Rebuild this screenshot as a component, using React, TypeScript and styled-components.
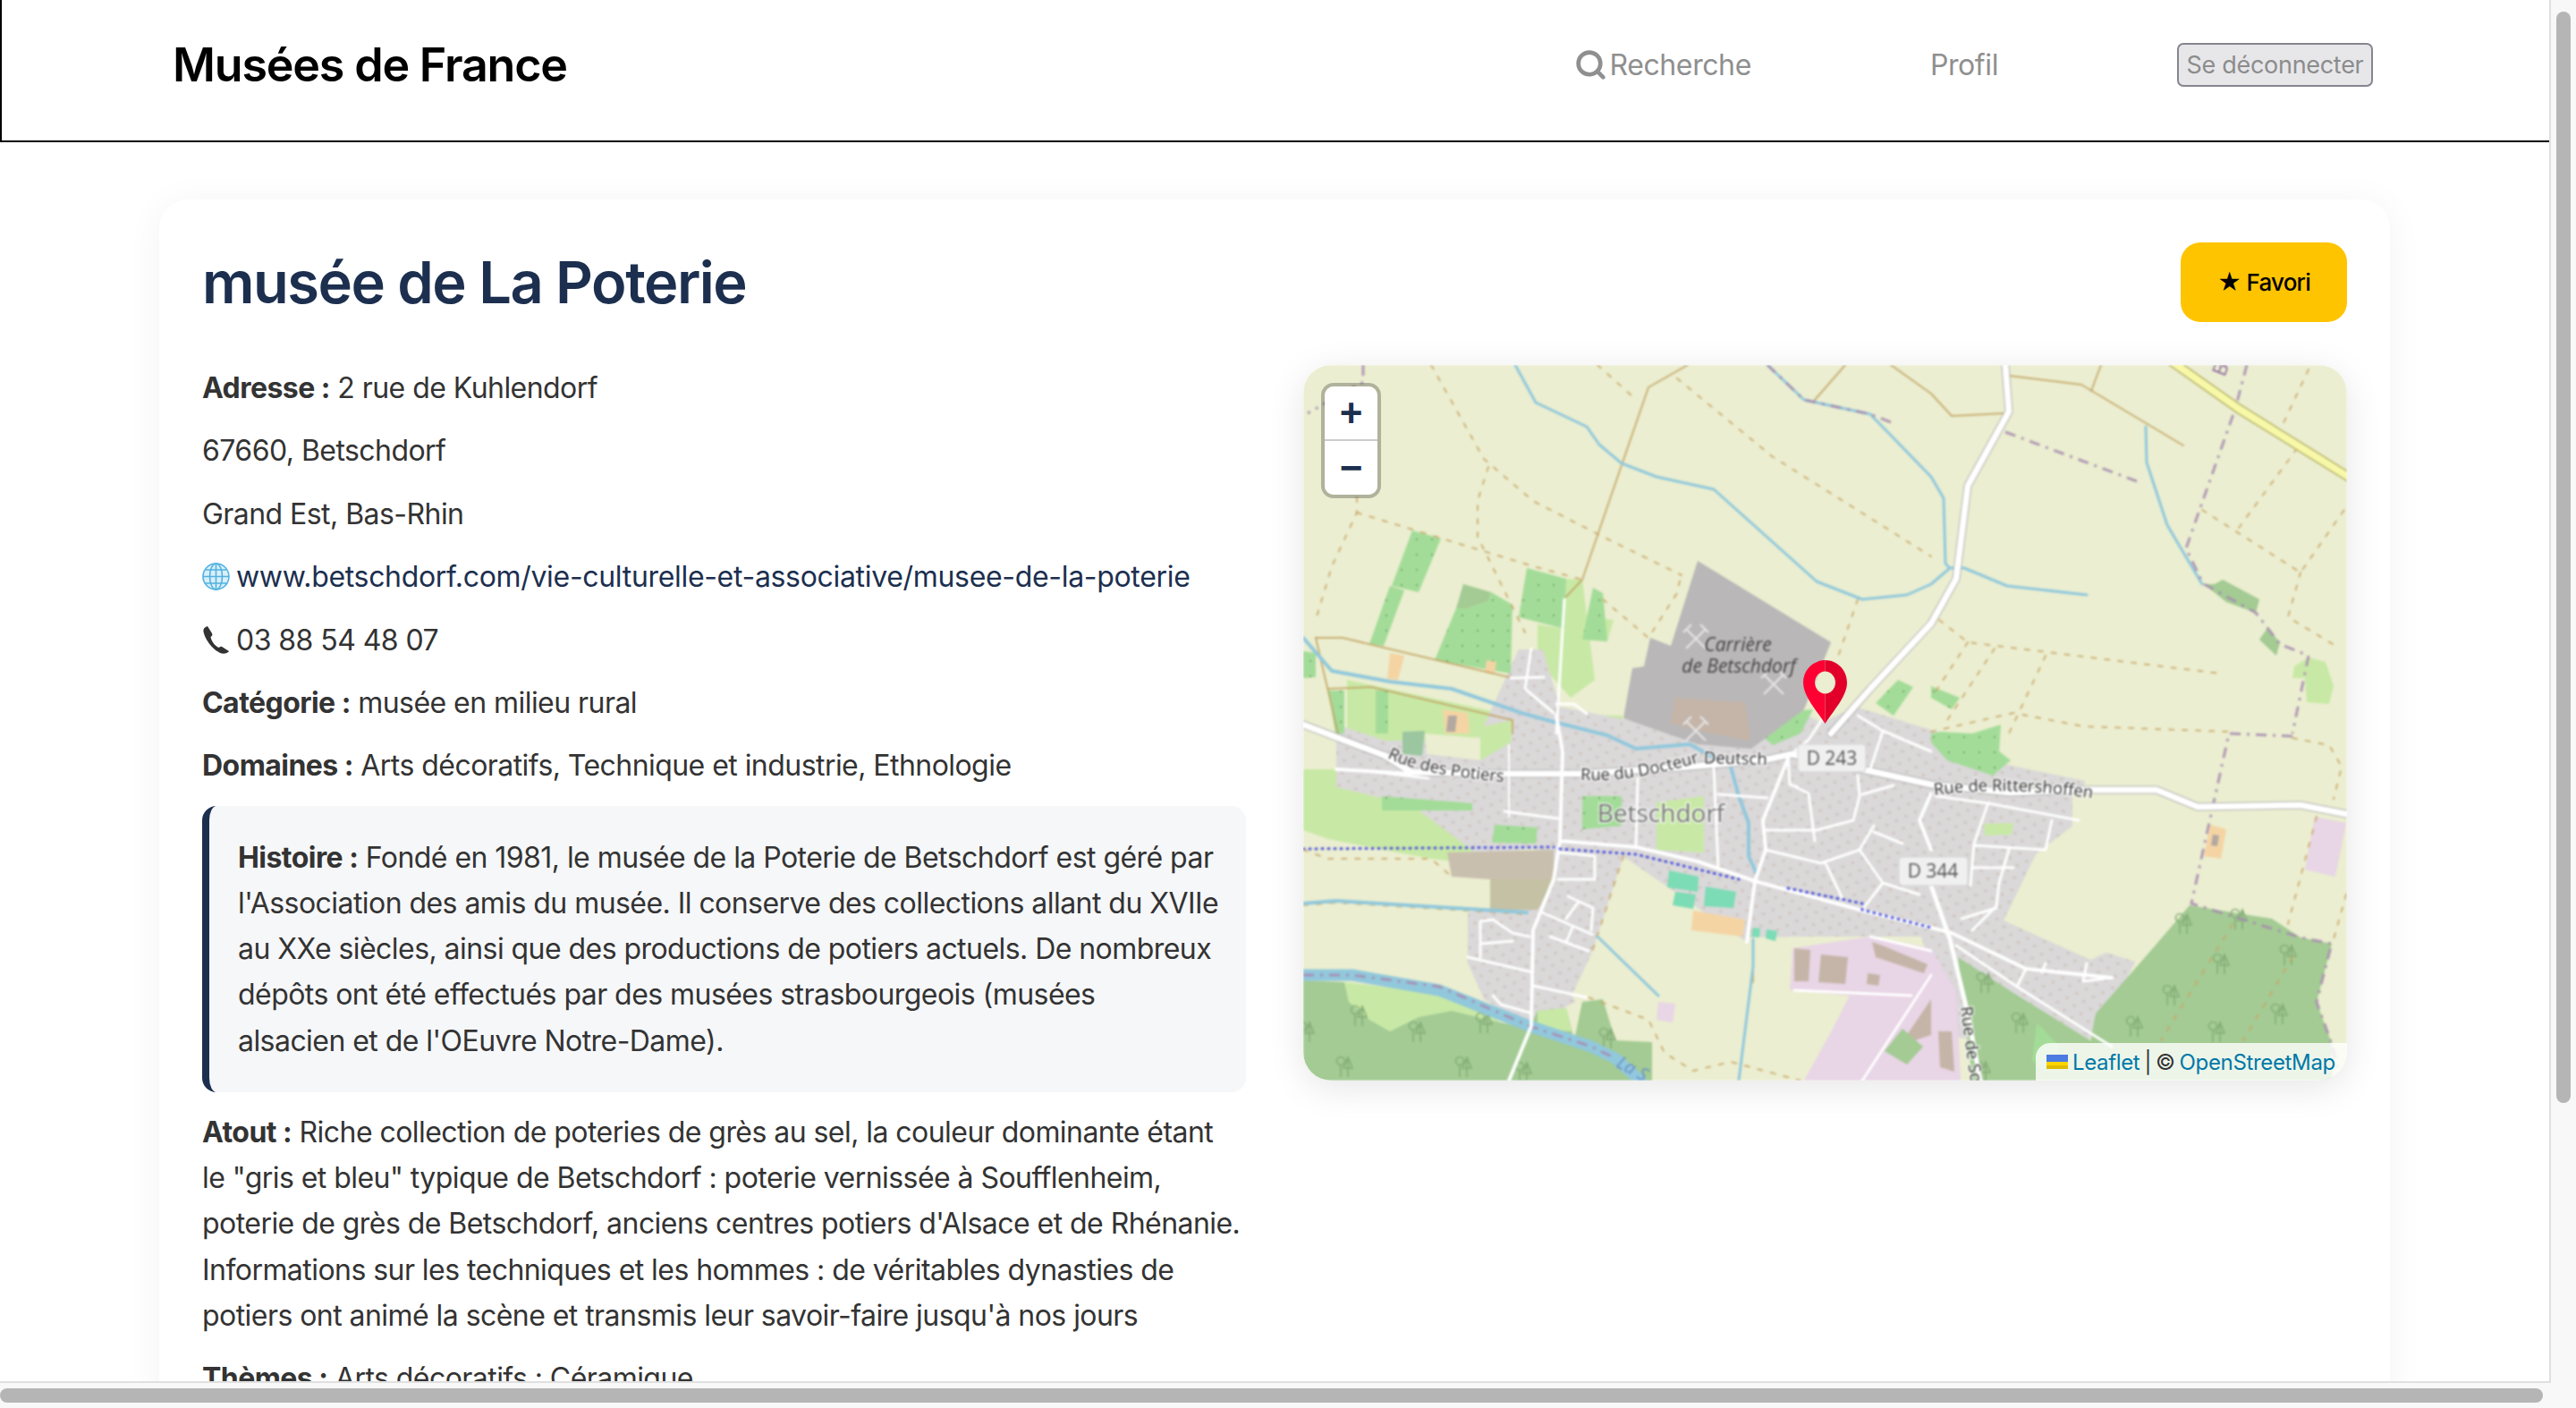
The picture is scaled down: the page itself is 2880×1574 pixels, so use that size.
import React from 'react'
import styled, { createGlobalStyle } from 'styled-components'
import { Search } from 'lucide-react'

const NAVY = '#1c2f4f'
const TEXT_FONT = '"Inter", "Noto Sans", "Liberation Sans", sans-serif'

const GlobalStyle = createGlobalStyle`
  html, body {
    margin: 0;
    height: 100%;
    overflow: hidden;
    background: #fff;
    font-family: ${TEXT_FONT};
  }
`

const Frame = styled.div`
  display: grid;
  grid-template-columns: 2850px 30px;
  grid-template-rows: 1544px 30px;
  width: 2880px;
  height: 1574px;
`
const Viewport = styled.div`
  overflow: hidden;
  min-width: 0;
`
const VerticalRail = styled.div`
  box-sizing: border-box;
  padding: 13px 6px 0;
  background: #f8f8f8;
  border-left: 2px solid #e0e0e0;
`
const HorizontalRail = styled.div`
  box-sizing: border-box;
  padding-top: 6px;
  background: #f8f8f8;
  border-top: 2px solid #e0e0e0;
`
const RailCorner = styled.div`
  background: linear-gradient(#e0e0e0, #e0e0e0) 0 0 / 2px 2px no-repeat #f8f8f8;
`
const Thumb = styled.div<{ $w: string; $h: string }>`
  width: ${(p) => p.$w};
  height: ${(p) => p.$h};
  background: #b5b5b5;
  border-radius: 8px;
`
const Header = styled.header`
  box-sizing: border-box;
  height: 159px;
  padding: 0 197px 12px 191px;
  display: flex;
  align-items: center;
  justify-content: space-between;
  border-left: 2px solid #000;
  border-bottom: 2px solid #000;
`
const Brand = styled.div`
  font-size: 52px;
  font-weight: 600;
  color: #000;
  letter-spacing: -1.2px;
`
const Nav = styled.nav`
  display: flex;
  align-items: center;
  gap: 200px;
`
const NavItem = styled.a`
  display: flex;
  align-items: center;
  gap: 2px;
  font-size: 32px;
  color: #8f8f8f;
  letter-spacing: -0.4px;
`
const LogoutButton = styled.button`
  box-sizing: border-box;
  height: 49px;
  width: 219px;
  padding: 0;
  background: #e7e7ea;
  border: 2px solid #85858f;
  border-radius: 7px;
  font-family: ${TEXT_FONT};
  font-size: 27px;
  color: #8c8c8c;
  letter-spacing: -0.3px;
`
const Main = styled.main`
  padding: 64px 178px;
`
const Card = styled.section`
  box-sizing: border-box;
  width: 2494px;
  min-height: 1640px;
  padding: 48px;
  background: #fff;
  border-radius: 32px;
  box-shadow: 0 4px 40px rgba(0, 0, 0, 0.05);
`
const CardHead = styled.div`
  display: flex;
  justify-content: space-between;
  align-items: center;
  margin-bottom: 48px;
`
const Title = styled.h1`
  margin: 0;
  font-size: 65px;
  font-weight: 600;
  color: ${NAVY};
  letter-spacing: -1.5px;
`
const FavoriteButton = styled.button`
  width: 186px;
  height: 89px;
  padding: 0;
  border: none;
  border-radius: 22px;
  background: #ffc400;
  font-family: ${TEXT_FONT};
  font-size: 26px;
  font-weight: 500;
  color: #000;
  letter-spacing: -0.8px;
`
const Columns = styled.div`
  display: grid;
  grid-template-columns: 1167px 1167px;
  gap: 64px;
  align-items: start;
`
const Line = styled.p`
  margin: 0 0 19.2px;
  font-size: 32px;
  line-height: 51.2px;
  color: #333;
  letter-spacing: -0.55px;
  white-space: nowrap;
  strong { font-weight: 700; }
`
const IconLine = styled(Line)`
  display: flex;
  align-items: center;
  gap: 7px;
`
const SiteLink = styled.a`
  color: ${NAVY};
  letter-spacing: -0.32px;
`
const History = styled.blockquote`
  box-sizing: border-box;
  margin: 0 0 19.2px;
  padding: 32px;
  height: 320px;
  background: #f6f7f9;
  border-left: 8px solid ${NAVY};
  border-radius: 16px;
`
const HistoryText = styled(Line)`
  margin: 0;
`
const MapFrame = styled.div`
  position: relative;
  height: 800px;
  border-radius: 32px;
  overflow: hidden;
  box-shadow: 0 8px 40px rgba(0, 0, 0, 0.1);
`
const MapArt = styled.svg`
  display: block;
  width: 1167px;
  height: 800px;
  filter: blur(0.8px);
`
const ZoomBox = styled.div`
  position: absolute;
  top: 20px;
  left: 20px;
  width: 67px;
  box-sizing: border-box;
  border: 4px solid rgba(0, 0, 0, 0.25);
  border-radius: 14px;
  background-clip: padding-box;
  overflow: hidden;
`
const ZoomButton = styled.div<{ $last?: boolean }>`
  height: ${(p) => (p.$last ? '60px' : '61px')};
  background: #fff;
  display: flex;
  align-items: center;
  justify-content: center;
  box-sizing: border-box;
  border-bottom: ${(p) => (p.$last ? 'none' : '2px solid #ccc')};
  font-family: "Liberation Sans", sans-serif;
  font-size: 44px;
  font-weight: 700;
  color: ${NAVY};
`
const Pin = styled.svg`
  position: absolute;
  left: 559px;
  top: 330px;
  width: 49px;
  height: 71px;
`
const Attribution = styled.div`
  position: absolute;
  right: 0;
  bottom: 0;
  height: 42px;
  width: 348px;
  box-sizing: border-box;
  padding-left: 12px;
  display: flex;
  align-items: center;
  gap: 5px;
  background: rgba(255, 255, 255, 0.8);
  border-top-left-radius: 16px;
  font-size: 24px;
  letter-spacing: -0.35px;
  color: #333;
  white-space: nowrap;
`
const AttributionLink = styled.a`
  color: #0078a8;
`

type Shape = [string, string]

const AREAS: Shape[] = [
  // light meadows and fields
  ['#c8e9a5', '0,452 37,452 88,478 195,492 214,514 214,560 143,552 28,530 0,520'],
  ['#c8e9a5', '49,352 221,389 234,412 240,440 120,430 49,412'],
  ['#c8e9a5', '294,239 312,240 326,352 299,372 262,330 262,290 292,295'],
  ['#c8e9a5', '326,282 347,285 340,309 322,305'],
  ['#c8e9a5', '230,389 356,392 372,430 300,440 240,420'],
  ['#c8e9a5', '1124,327 1143,332 1152,359 1147,379 1122,377 1120,350 1106,350 1108,337'],
  ['#c8e9a5', '867,478 880,478 876,509 858,509'],
  // residential village
  ['url(#houses)', '37,402 92,420 195,419 241,318 268,318 287,382 378,400 489,391 544,382 580,400 617,382 709,410 783,446 874,465 867,510 819,547 783,621 930,667 904,720 874,760 801,768 727,750 691,639 562,639 496,640 500,660 430,650 358,549 322,659 317,705 253,739 202,709 184,669 184,612 225,590 262,540 195,547 121,492 37,472'],
  ['#ebeed0', '136,412 198,417 198,442 138,435'],
  ['#ebeed0', '322,659 362,552 500,648 496,800 370,800 300,705'],
  ['#ebeed0', '0,555 161,555 250,600 184,612 184,669 202,709 152,695 0,680'],
  ['#ebeed0', '791,470 860,478 860,515 830,560 783,621 880,665 1000,610 1040,520 1000,480'],
  ['#c8e9a5', '198,405 234,397 232,422 198,442'],
  ['#9bc6a0', '111,410 136,409 133,437 111,435'],
  ['#c8e9a5', '395,489 448,482 448,545 395,542'],
  ['#c8e9a5', '761,513 794,512 792,525 762,526'],
  // forests
  ['#c8e9a5', '46,690 152,702 189,712 221,735 166,722 129,729 97,745 74,732 51,712'],
  ['#a3cb93', '0,688 46,690 51,712 74,732 97,745 129,729 166,722 221,735 253,742 262,722 294,719 303,755 312,712 335,709 349,755 390,757 390,800 0,800'],
  ['#c8e9a5', '262,722 294,719 300,745 262,742'],
  ['#a3cb93', '991,604 1051,614 1083,619 1115,640 1150,647 1133,712 1150,759 1150,800 872,800 886,725 950,652'],
  ['#a3cb93', '732,662 794,702 886,759 872,800 748,800'],
  ['#a3dc98', '820,735 846,762 830,790 815,778'],
  ['#a3cb93', '1028,240 1069,262 1065,277 1032,265 1007,245 1019,245'],
  ['#a3cb93', '1078,294 1092,310 1088,325 1069,307'],
  ['#a3cb93', '179,245 210,254 207,264 184,272 171,272'],
  // orchards
  ['url(#orchard)', '122,185 154,194 129,254 99,247'],
  ['url(#orchard)', '97,247 113,252 90,314 74,312'],
  ['url(#orchard)', '210,254 234,268 232,345 147,330 171,272 184,272 207,264'],
  ['url(#orchard)', '250,227 294,239 292,295 253,285 241,282'],
  ['url(#orchard)', '324,249 335,255 340,309 312,307'],
  ['url(#orchard)', '0,320 14,322 14,349 0,350'],
  ['url(#orchard)', '28,364 46,364 46,412 36,412'],
  ['url(#orchard)', '81,364 95,364 95,412 81,412'],
  ['url(#orchard)', '312,482 356,482 356,515 312,519'],
  ['url(#orchard)', '214,514 262,517 260,535 211,534'],
  ['url(#orchard)', '88,482 189,490 189,498 88,498'],
  ['url(#orchard)', '510,412 528,389 570,385 556,412 525,425'],
  ['url(#orchard)', '702,412 713,410 748,412 780,402 778,432 791,442 771,459 720,442 702,422'],
  ['url(#orchard)', '702,359 734,372 725,385 702,372'],
  ['url(#orchard)', '640,378 665,352 682,360 660,392'],
  // quarry
  ['#b9b7b8', '441,219 590,310 560,385 501,429 441,424 358,395 368,339 381,337 388,305 411,314'],
  ['#c5b5a8', '416,372 494,377 500,420 445,410 410,400'],
  // farms, pitches, schools
  ['#f5d4a4', '97,322 113,325 106,352 94,351'],
  ['#f5d4a4', '156,385 184,389 186,412 159,412'],
  ['#f5d4a4', '205,330 216,332 214,345 203,344'],
  ['#f5d4a4', '436,610 494,620 491,639 434,632'],
  ['#f5d4a4', '1014,514 1032,519 1026,552 1007,549'],
  ['#b3a9a0', '1017,525 1024,526 1022,538 1015,537'],
  ['#b3a9a0', '162,392 172,392 170,410 160,410'],
  ['#c9bfae', '161,545 280,542 280,575 209,575 166,572'],
  ['#c4c1a4', '209,575 280,575 262,609 209,609'],
  ['#7bdcb5', '409,565 442,572 441,589 407,584'],
  ['#7bdcb5', '416,589 439,592 436,608 413,604'],
  ['#7bdcb5', '450,583 484,589 481,607 448,605'],
  ['#7bdcb5', '503,629 511,630 510,640 501,639'],
  ['#7bdcb5', '518,631 530,633 528,644 517,641'],
  // industrial
  ['#e8d5e6', '547,652 634,639 702,652 730,700 735,800 560,800 592,742 611,705 544,699'],
  ['#e8d5e6', '397,712 416,714 413,735 395,732'],
  ['#e8d5e6', '1131,505 1166,512 1154,572 1120,564'],
  ['#c5b5a8', '549,652 567,654 565,689 549,689'],
  ['#c5b5a8', '579,659 609,662 606,692 576,690'],
  ['#c5b5a8', '631,680 645,682 643,694 630,692'],
  ['#c5b5a8', '636,645 650,650 698,670 694,680 640,662'],
  ['#c5b5a8', '675,749 702,709 702,749 684,755'],
  ['#c5b5a8', '710,745 725,745 728,790 712,785'],
  ['#a3cb93', '670,742 693,762 675,782 650,767'],
]

const WATER: [number, string][] = [
  [3, '237,0 260,42 317,69 331,89 356,110 395,125 459,139 574,242 625,262 675,257 702,245 723,227 739,227 787,247 876,257'],
  [3, '519,0 560,39 634,55 702,125 716,149 718,222 723,227'],
  [3, '942,69 943,109 966,179 1005,245'],
  [4, '0,305 32,342 97,354 166,362 244,389 280,399 340,414 372,429 432,424 478,449 487,482 498,512 498,549 507,569'],
  [3, '503,642 503,672 487,800'],
  [4, '0,602 37,599 250,612'],
  [3, '329,639 397,705'],
  [13, '0,682 55,682 152,699 253,739 322,762 349,775 377,800'],
]

const TRACKS = [
  '430,0 386,25 356,112 312,240 294,259',
  '606,0 572,39',
  '657,0 702,32 725,57 785,54',
  '789,12 870,22 984,90',
  '892,0 881,29',
  '14,305 44,305 230,349',
  '14,305 39,412',
  '28,362 76,360 234,397 234,412',
  '503,660 503,690',
]

const DASHES = [
  '143,0 202,105 257,152 335,192 423,235',
  '60,165 257,225 312,240',
  '60,148 60,165 32,225 14,285',
  '207,114 195,152 195,192 248,299',
  '335,262 386,305 418,255 423,232',
  '418,15 524,102 702,214',
  '329,0 368,35',
  '620,262 597,329',
  '1005,162 1115,232 1166,159',
  '1046,182 1110,95',
  '1115,232 1101,282 1156,315',
  '711,285 743,310 1026,345',
  '743,310 707,365',
  '773,317 720,397',
  '830,325 789,412',
  '702,410 794,389 872,404 1037,410',
  '1124,5 1094,69',
  '1106,417 1147,425 1161,449 1152,485',
  '1133,505 1101,625',
  '1166,592 1150,649',
  '1039,625 959,755',
  '1106,662 1051,755',
  '319,707 386,732 404,769 436,789 478,779 556,800',
  '358,549 322,659',
  '0,542 28,552 143,552 166,572',
  '0,604 37,601 250,614',
]

const BORDERS = [
  '67,0 67,19 5,54',
  '1055,0 1042,49 987,205 1005,242',
  '1007,245 1065,277 1092,312 1124,325 1106,412',
  '1106,415 1035,412 993,602 1115,640 1150,647 1133,712 1150,759 1160,800',
  '519,0 560,39 634,55 657,64',
  '785,75 932,130',
  '0,682 55,682 152,695 253,739 322,762 349,775',
]

const MAIN_ROADS = [
  '785,0 789,52 743,135 730,239 702,289 634,362 590,412',
  '0,402 92,437',
  '92,437 120,455 221,457 312,457 420,450 514,442 546,435 634,454 702,469 790,478 867,475 954,475 1000,494 1115,492 1166,502',
]

const STREETS: [number, string][] = [
  [4, '37,452 120,457'],
  [4, '283,392 290,432 287,532 280,575 257,632 255,739 230,800'],
  [3, '292,262 283,412'],
  [4, '287,532 372,539 441,555 505,577 622,609 702,629 725,635 808,675 904,685'],
  [4, '544,435 514,509 517,542 505,577 496,645'],
  [5, '702,582 723,642 743,725 757,800'],
  [4, '702,479 689,509 702,542'],
  [3, '702,682 625,800'],
  [3, '634,639 702,655'],
  [3, '549,699 680,705'],
  [3, '730,649 798,695 904,762'],
  [3, '225,499 285,507'],
  [2, '230,425 230,505'],
  [3, '374,462 372,539'],
  [3, '459,449 464,562'],
  [3, '464,480 519,484'],
  [3, '517,520 574,520 615,509 622,482 620,459'],
  [3, '517,542 579,557 622,542 638,515'],
  [3, '622,542 648,579 625,609'],
  [3, '638,522 670,535'],
  [3, '648,579 689,592'],
  [3, '583,555 604,599'],
  [3, '551,472 565,479 572,532'],
  [3, '542,435 544,469 553,472'],
  [3, '620,392 648,409 634,452'],
  [3, '648,409 702,432'],
  [3, '583,392 565,419 546,435'],
  [3, '285,575 326,575 326,549 287,545'],
  [3, '267,612 324,637'],
  [3, '296,594 324,607 322,632'],
  [3, '294,619 308,600'],
  [3, '301,629 294,645'],
  [3, '276,639 319,655'],
  [3, '198,662 198,622 212,620 234,635 253,639'],
  [3, '198,647 234,644'],
  [3, '184,662 257,679'],
  [3, '257,694 317,707'],
  [3, '212,705 221,715 253,724'],
  [3, '232,350 269,349'],
  [3, '255,317 248,362 280,389'],
  [3, '283,379 303,379 317,390'],
  [3, '766,489 750,535 746,582'],
  [3, '750,537 830,542 837,509'],
  [3, '707,482 766,490 867,509'],
  [3, '789,542 778,579 775,605 748,632'],
  [3, '748,562 794,562'],
  [3, '736,619 775,607'],
  [3, '808,675 798,695'],
  [3, '830,669 826,679'],
  [3, '876,669 872,689 904,685'],
  [3, '80,455 140,462'],
  [3, '625,480 660,470'],
]

const TREES = [
  [3, 745], [62, 727], [127, 745], [46, 784], [179, 784], [246, 790], [340, 752], [202, 735],
  [984, 624], [1046, 619], [1026, 669], [1101, 659], [970, 704], [1091, 725], [929, 739], [1021, 745],
  [762, 690], [801, 735], [759, 789],
]

const HAMMERS = [[439, 304], [526, 355], [439, 407]]

const BUS_ROUTES = [
  '0,541 280,539',
  '287,541 372,547 487,575',
  '542,585 625,602 625,609 702,629',
]

const TerrainMap = () => (
  <MapArt viewBox="0 0 1167 800">
    <defs>
      <pattern id="houses" width="19" height="14" patternUnits="userSpaceOnUse" patternTransform="rotate(12)">
        <rect width="19" height="14" fill="#dad8d9" />
        <rect x="2" y="2" width="4" height="2.4" fill="#d0c5be" />
        <rect x="12" y="9" width="3" height="3" fill="#d0c5be" />
      </pattern>
      <pattern id="orchard" width="17" height="17" patternUnits="userSpaceOnUse">
        <rect width="17" height="17" fill="#a3dc98" />
        <circle cx="8" cy="8" r="1.1" fill="#6b9e62" />
      </pattern>
      <g id="tree" fill="none" stroke="#86ad78" strokeWidth="1.6">
        <circle cx="5" cy="6" r="4.5" />
        <path d="M5 10V24M13 24V4M8 14L13 2L18 14Z" />
      </g>
      <g id="hammer" fill="none" stroke="#e4e3e3" strokeWidth="2.4">
        <path d="M-11 -9L11 13M11 -9L-11 13M-14 -5L-5 -14M14 -5L5 -14" />
      </g>
    </defs>
    <rect width="1167" height="800" fill="#ebeed0" />

    {AREAS.map(([fill, points], i) => <polygon key={i} fill={fill} points={points} />)}
    {TREES.map(([x, y], i) => <use key={i} href="#tree" x={x - 9} y={y - 12} />)}
    {HAMMERS.map(([x, y], i) => <use key={i} href="#hammer" x={x} y={y} />)}

    <g fill="none" strokeLinejoin="round" strokeLinecap="round">
      {TRACKS.map((points, i) => <polyline key={i} points={points} stroke="#c3a566" strokeWidth="2" opacity="0.85" />)}
      {DASHES.map((points, i) => <polyline key={i} points={points} stroke="#c9a86c" strokeWidth="2" strokeDasharray="5 10" opacity="0.85" />)}
      {WATER.map(([w, points], i) => <polyline key={i} points={points} stroke="#91c8dc" strokeWidth={w} />)}
      {BORDERS.map((points, i) => <polyline key={i} points={points} stroke="#a78cb0" strokeWidth="3" strokeDasharray="12 7 3 7" strokeLinecap="butt" opacity="0.85" />)}

      <polyline points="968,-6 1046,49 1170,126" stroke="#b6b26a" strokeWidth="11" />
      <polyline points="968,-6 1046,49 1170,126" stroke="#f8f9a8" strokeWidth="8" />

      {MAIN_ROADS.map((points, i) => <polyline key={i} points={points} stroke="#b0b0b0" strokeWidth="9" />)}
      {STREETS.map(([w, points], i) => <polyline key={i} points={points} stroke="#fff" strokeWidth={w} />)}
      {MAIN_ROADS.map((points, i) => <polyline key={i} points={points} stroke="#fff" strokeWidth="7" />)}

      {BUS_ROUTES.map((points, i) => <polyline key={i} points={points} stroke="#4b53dc" strokeWidth="3" strokeDasharray="1 6" />)}
    </g>

    <path id="labelPotiers" d="M94 439 Q130 458 224 466" fill="none" />
    <path id="labelDocteur" d="M310 464 C360 466 400 456 440 445 L560 448" fill="none" />
    <path id="labelRitters" d="M706 481 Q790 469 900 487" fill="none" />
    <path id="labelSo" d="M735 718 L746 800" fill="none" />
    <path id="labelSauer" d="M349 784 L400 812" fill="none" />

    <g fontFamily='"Open Sans", sans-serif' fontSize="18.5" fill="#333" stroke="#fff" strokeWidth="3" strokeOpacity="0.7" style={{ paintOrder: 'stroke' }}>
      <text><textPath href="#labelPotiers">Rue des Potiers</textPath></text>
      <text><textPath href="#labelDocteur">Rue du Docteur Deutsch</textPath></text>
      <text><textPath href="#labelRitters">Rue de Rittershoffen</textPath></text>
      <text><textPath href="#labelSo">Rue de So</textPath></text>
    </g>
    <text fontFamily='"Open Sans", sans-serif' fontSize="20" fontStyle="italic" fill="#6a90c8"><textPath href="#labelSauer">La S</textPath></text>
    <text x="1030" y="14" fontFamily='"Open Sans", sans-serif' fontSize="22" fill="#8f6aa0" transform="rotate(-68 1030 14)">Ba</text>

    <g fontFamily='"Open Sans", sans-serif' fontSize="21" fontStyle="italic" fill="#444">
      <text x="486" y="320" textAnchor="middle">Carrière</text>
      <text x="487" y="344" textAnchor="middle">de Betschdorf</text>
    </g>
    <text x="400" y="511" textAnchor="middle" fontFamily='"Open Sans", sans-serif' fontSize="28" fill="#777" stroke="#fff" strokeWidth="3" strokeOpacity="0.7" style={{ paintOrder: 'stroke' }}>Betschdorf</text>

    <rect x="553" y="424" width="76" height="31" rx="4" fill="#f0f0f0" stroke="#d4d4d4" />
    <text x="591" y="447" textAnchor="middle" fontFamily='"Open Sans", sans-serif' fontSize="21" fill="#555">D 243</text>
    <rect x="666" y="550" width="77" height="32" rx="4" fill="#f0f0f0" stroke="#d4d4d4" />
    <text x="704" y="573" textAnchor="middle" fontFamily='"Open Sans", sans-serif' fontSize="21" fill="#555">D 344</text>
  </MapArt>
)

const GlobeIcon = () => (
  <svg width="31" height="31" viewBox="0 0 31 31" fill="none" stroke="#52b2e0" strokeWidth="1.6">
    <circle cx="15.5" cy="15.5" r="14.5" fill="#d9eff9" />
    <ellipse cx="15.5" cy="15.5" rx="7" ry="14.5" />
    <path d="M15.5 1V30M1 15.5H30M3.5 8H27.5M3.5 23H27.5" />
  </svg>
)

const PhoneIcon = () => (
  <svg width="31" height="32" viewBox="0 0 31 32" fill="#333">
    <path d="M6 1 L11 9 C12 11 11 12 9.5 13 C10 17 14 23 18.5 25 C20 24 21.5 23 23 24.5 L30 29 C29 31 25 32 22 31.5 C13 29 3 16 1.5 7 C1 4 3 2 6 1 Z" />
  </svg>
)

const App = () => (
  <Frame>
    <GlobalStyle />
    <Viewport>
      <Header>
        <Brand>Musées de France</Brand>
        <Nav>
          <NavItem><Search size={37} strokeWidth={3} color="#8f8f8f" />Recherche</NavItem>
          <NavItem>Profil</NavItem>
          <LogoutButton>Se déconnecter</LogoutButton>
        </Nav>
      </Header>
      <Main>
        <Card>
          <CardHead>
            <Title>musée de La Poterie</Title>
            <FavoriteButton>★ Favori</FavoriteButton>
          </CardHead>
          <Columns>
            <div>
              <Line><strong>Adresse :</strong> 2 rue de Kuhlendorf</Line>
              <Line>67660, Betschdorf</Line>
              <Line>Grand Est, Bas-Rhin</Line>
              <IconLine><GlobeIcon /><SiteLink>www.betschdorf.com/vie-culturelle-et-associative/musee-de-la-poterie</SiteLink></IconLine>
              <IconLine><PhoneIcon />03 88 54 48 07</IconLine>
              <Line><strong>Catégorie :</strong> musée en milieu rural</Line>
              <Line><strong>Domaines :</strong> Arts décoratifs, Technique et industrie, Ethnologie</Line>
              <History>
                <HistoryText>
                  <strong>Histoire :</strong> Fondé en 1981, le musée de la Poterie de Betschdorf est géré par<br />
                  l'Association des amis du musée. Il conserve des collections allant du XVIIe<br />
                  au XXe siècles, ainsi que des productions de potiers actuels. De nombreux<br />
                  dépôts ont été effectués par des musées strasbourgeois (musées<br />
                  alsacien et de l'OEuvre Notre-Dame).
                </HistoryText>
              </History>
              <Line>
                <strong>Atout :</strong> Riche collection de poteries de grès au sel, la couleur dominante étant<br />
                le "gris et bleu" typique de Betschdorf : poterie vernissée à Soufflenheim,<br />
                poterie de grès de Betschdorf, anciens centres potiers d'Alsace et de Rhénanie.<br />
                Informations sur les techniques et les hommes : de véritables dynasties de<br />
                potiers ont animé la scène et transmis leur savoir-faire jusqu'à nos jours
              </Line>
              <Line><strong>Thèmes :</strong> Arts décoratifs : Céramique</Line>
            </div>
            <MapFrame>
              <TerrainMap />
              <ZoomBox>
                <ZoomButton>+</ZoomButton>
                <ZoomButton $last>−</ZoomButton>
              </ZoomBox>
              <Pin viewBox="0 0 49 71">
                <path fill="#ff0033" fillRule="evenodd" d="M24.5 0C11 0 0 11 0 25C0 40 14 55 24.5 71V37.5C18.5 37.5 13 32 13 25C13 18 18.5 12.5 24.5 12.5Z" />
                <path fill="#e2002b" fillRule="evenodd" d="M24.5 0C38 0 49 11 49 25C49 40 35 55 24.5 71V37.5C30.5 37.5 36 32 36 25C36 18 30.5 12.5 24.5 12.5Z" />
              </Pin>
              <Attribution>
                <svg width="24" height="16" viewBox="0 0 12 8">
                  <rect width="12" height="4" fill="#4c7be1" />
                  <rect y="4" width="12" height="2" fill="#ffd500" />
                  <rect y="6" width="12" height="2" fill="#e0bc00" />
                </svg>
                <AttributionLink>Leaflet</AttributionLink>
                <span>|</span>
                <span>©</span>
                <AttributionLink>OpenStreetMap</AttributionLink>
              </Attribution>
            </MapFrame>
          </Columns>
        </Card>
      </Main>
    </Viewport>
    <VerticalRail><Thumb $w="16px" $h="1220px" /></VerticalRail>
    <HorizontalRail><Thumb $w="2843px" $h="16px" /></HorizontalRail>
    <RailCorner />
  </Frame>
)

export default App
